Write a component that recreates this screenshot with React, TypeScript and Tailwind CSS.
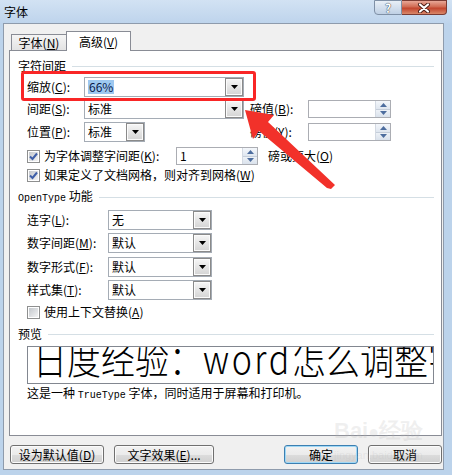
import React from "react";

function U({ k }: { k: string }) {
  return (
    <>
      (<span className="underline underline-offset-[1px]">{k}</span>)
    </>
  );
}

function DownTri() {
  return (
    <svg width="7" height="4" viewBox="0 0 7 4">
      <path d="M0 0H7L3.5 4Z" fill="#000" />
    </svg>
  );
}

function Combo({ w, text, sel }: { w: string; text: string; sel?: boolean }) {
  return (
    <div className={`${w} h-[20px] flex border border-[#a5acb5] bg-white`}>
      <div className="flex-1 flex items-center pl-[3px] leading-[14px] whitespace-nowrap overflow-hidden">
        {sel ? <span className="bg-[#9ec8f0] text-[#0a1a4a] px-px">{text}</span> : text}
      </div>
      <div className="w-[18px] h-full border border-[#8a8a8a] bg-gradient-to-b from-[#f6f6f6] to-[#d4d4d4] shadow-[inset_0_0_0_1px_#fbfbfb] flex items-center justify-center">
        <DownTri />
      </div>
    </div>
  );
}

function Spin({ w, value }: { w: string; value: string }) {
  return (
    <div className={`${w} h-[18px] flex border border-[#abadb3] bg-white`}>
      <div className="flex-1 flex items-center pl-[3px] leading-[14px]">{value}</div>
      <div className="w-[15px] flex flex-col border-l border-[#d3d9e2]">
        <div className="flex-1 flex items-center justify-center bg-gradient-to-b from-[#f4f7fb] to-[#dfe6ef] border-b border-[#c5ceda]">
          <svg width="7" height="4" viewBox="0 0 7 4">
            <path d="M0 4H7L3.5 0Z" fill="#4d6d9e" />
          </svg>
        </div>
        <div className="flex-1 flex items-center justify-center bg-gradient-to-b from-[#eef2f7] to-[#dae2ec]">
          <svg width="7" height="4" viewBox="0 0 7 4">
            <path d="M0 0H7L3.5 4Z" fill="#4d6d9e" />
          </svg>
        </div>
      </div>
    </div>
  );
}

function Check({ on }: { on?: boolean }) {
  return (
    <div className="w-[13px] h-[13px] border border-[#8e8f8f] bg-white p-px shrink-0">
      <div className="w-full h-full bg-gradient-to-br from-[#c3c7cc] to-[#f4f4f5] flex items-center justify-center">
        {on && (
          <svg width="9" height="9" viewBox="0 0 9 9">
            <path d="M1 4.5L3.5 7L8 1.5" fill="none" stroke="#3f5fa8" strokeWidth="2" />
          </svg>
        )}
      </div>
    </div>
  );
}

function Btn({ w, children, def }: { w: string; children: React.ReactNode; def?: boolean }) {
  return (
    <div
      className={`${w} h-[19px] rounded-[3px] border flex items-center justify-center leading-[14px] bg-[linear-gradient(#f2f2f2,#ebebeb_50%,#dddddd_50%,#cfcfcf)] ${
        def
          ? "border-[#3c7fb1] shadow-[inset_0_0_0_1px_#9fd8f6]"
          : "border-[#707070] shadow-[inset_0_0_0_1px_#fbfbfb]"
      }`}
    >
      {children}
    </div>
  );
}

function Group({ title, mt }: { title: React.ReactNode; mt: string }) {
  return (
    <div className={`h-[20px] flex items-center gap-[6px] ${mt}`}>
      <span className="whitespace-nowrap">{title}</span>
      <div className="flex-1 h-px bg-[#d5dfe5]" />
    </div>
  );
}

export default function App() {
  return (
    <div className="relative w-[452px] h-[475px] overflow-hidden flex flex-col bg-[#bcd3eb] text-[12px] leading-[14px] text-black font-['Noto_Sans_CJK_SC','Noto_Sans',sans-serif]">
      {/* title bar */}
      <div className="h-[23px] flex items-start bg-gradient-to-b from-[#d2e2f3] to-[#bed4ec]">
        <div className="pl-[4px] pt-[5px]">字体</div>
        <div className="ml-auto mr-[5px] flex">
          <div className="w-[28px] h-[15px] border border-[#7f90a6] rounded-bl-[4px] bg-gradient-to-b from-[#e8eff7] to-[#bfd0e4] flex items-center justify-center text-white font-bold text-[12px] leading-[12px] [text-shadow:0_0_1px_#2c3a4c,0_0_1px_#2c3a4c]">
            ?
          </div>
          <div className="w-[45px] h-[15px] border border-l-0 border-[#7a3b33] rounded-br-[4px] bg-[linear-gradient(#e8a797,#d06a52_45%,#c2452e_55%,#d98869)] flex items-center justify-center">
            <svg width="14" height="10" viewBox="0 0 14 10">
              <path d="M3 1.5L11 8.5M11 1.5L3 8.5" stroke="#4a1d16" strokeWidth="4" strokeLinecap="round" />
              <path d="M3 1.5L11 8.5M11 1.5L3 8.5" stroke="#ffffff" strokeWidth="2.2" strokeLinecap="round" />
            </svg>
          </div>
        </div>
      </div>

      <div className="flex flex-1">
        <div className="w-[3px]" />
        {/* client */}
        <div className="w-[441px] border border-[#8e9bac] bg-[#f0f0f0] flex flex-col pt-[7px] pl-[5px]">
          {/* tabs */}
          <div className="h-[19px] flex items-end pl-[2px]">
            <div className="w-[56px] h-[16px] border border-b-0 border-[#898c95] bg-gradient-to-b from-[#f5f5f5] to-[#e3e3e3] flex items-center justify-center">
              字体<U k="N" />
            </div>
            <div className="relative z-10 -ml-px -mb-px w-[65px] h-[20px] border border-b-0 border-[#898c95] bg-white flex items-center justify-center">
              高级<U k="V" />
            </div>
          </div>

          {/* panel */}
          <div className="w-[433px] h-[386px] border border-[#898c95] bg-white flex flex-col pl-[8px] pr-[7px]">
            <Group title="字符间距" mt="mt-[5px]" />

            <div className="h-[20px] flex items-center pl-[9px] mt-[1px]">
              <div className="w-[57px] whitespace-nowrap">
                缩放<U k="C" />:
              </div>
              <Combo w="w-[160px]" text="66%" sel />
            </div>

            <div className="h-[20px] flex items-center pl-[9px] mt-[2px]">
              <div className="w-[57px] whitespace-nowrap">
                间距<U k="S" />:
              </div>
              <div className="w-[166px]">
                <Combo w="w-[160px]" text="标准" />
              </div>
              <div className="w-[58px] whitespace-nowrap">
                磅值<U k="B" />:
              </div>
              <Spin w="w-[83px]" value="" />
            </div>

            <div className="h-[20px] flex items-center pl-[9px] mt-[3px]">
              <div className="w-[57px] whitespace-nowrap">
                位置<U k="P" />:
              </div>
              <div className="w-[166px]">
                <Combo w="w-[61px]" text="标准" />
              </div>
              <div className="w-[58px] whitespace-nowrap">
                磅值<U k="Y" />:
              </div>
              <Spin w="w-[83px]" value="" />
            </div>

            <div className="h-[18px] flex items-center pl-[9px] mt-[5px]">
              <div className="w-[149px] flex items-center gap-[4px] whitespace-nowrap">
                <Check on />
                <span>
                  为字体调整字间距<U k="K" />:
                </span>
              </div>
              <Spin w="w-[82px]" value="1" />
              <div className="ml-[10px] whitespace-nowrap">
                磅或更大<U k="O" />
              </div>
            </div>

            <div className="h-[18px] flex items-center pl-[9px] mt-[1px] gap-[4px] whitespace-nowrap">
              <Check on />
              <span>
                如果定义了文档网格，则对齐到网格<U k="W" />
              </span>
            </div>

            <Group
              title={
                <>
                  <span className="font-['Liberation_Mono',monospace] text-[10px]">OpenType</span> 功能
                </>
              }
              mt="mt-[3px]"
            />

            <div className="h-[20px] flex items-center pl-[9px] mt-[3px]">
              <div className="w-[81px] whitespace-nowrap">
                连字<U k="L" />:
              </div>
              <Combo w="w-[104px]" text="无" />
            </div>
            <div className="h-[20px] flex items-center pl-[9px] mt-[3px]">
              <div className="w-[81px] whitespace-nowrap">
                数字间距<U k="M" />:
              </div>
              <Combo w="w-[104px]" text="默认" />
            </div>
            <div className="h-[20px] flex items-center pl-[9px] mt-[4px]">
              <div className="w-[81px] whitespace-nowrap">
                数字形式<U k="F" />:
              </div>
              <Combo w="w-[104px]" text="默认" />
            </div>
            <div className="h-[20px] flex items-center pl-[9px] mt-[3px]">
              <div className="w-[81px] whitespace-nowrap">
                样式集<U k="T" />:
              </div>
              <Combo w="w-[104px]" text="默认" />
            </div>

            <div className="h-[18px] flex items-center pl-[9px] mt-[3px] gap-[4px] whitespace-nowrap">
              <Check />
              <span>
                使用上下文替换<U k="A" />
              </span>
            </div>

            <Group title="预览" mt="mt-[3px]" />

            <div className="ml-[9px] mt-[2px] w-[407px] h-[38px] border border-[#828790] bg-white overflow-hidden pl-[5px]">
              <div className="text-[40px] leading-[20px] font-light whitespace-nowrap origin-left scale-x-[0.85]">
                日度经验：<span className="tracking-[3px]">word</span>怎么调整字
              </div>
            </div>

            <div className="pl-[9px] mt-[2px] h-[14px] whitespace-nowrap">
              这是一种 <span className="font-['Liberation_Mono',monospace] text-[10px]">TrueType</span> 字体，同时适用于屏幕和打印机。
            </div>
          </div>

          {/* bottom buttons */}
          <div className="mt-[9px] flex items-center pl-[1px] pr-[1px]">
            <Btn w="w-[94px]">
              设为默认值<U k="D" />
            </Btn>
            <div className="ml-[10px]">
              <Btn w="w-[100px]">
                文字效果<U k="E" />...
              </Btn>
            </div>
            <div className="ml-auto flex gap-[10px]">
              <Btn w="w-[74px]" def>
                确定
              </Btn>
              <Btn w="w-[74px]">取消</Btn>
            </div>
          </div>
        </div>
        <div className="flex-1" />
      </div>
      <div className="h-[5px]" />

      {/* red highlight rectangle (annotation overlay) */}
      <div className="absolute left-[21px] top-[71px] w-[235px] h-[30px] border-[3px] border-[#f92626] rounded-[3px] pointer-events-none" />

      {/* red arrow annotation */}
      <svg className="absolute left-0 top-0 pointer-events-none" width="452" height="475" viewBox="0 0 452 475">
        <polygon
          points="245,110 274,115 268,122 335,185 331,189 327,188 259,131 253,139"
          fill="#f2312a"
        />
      </svg>

      {/* faint watermark */}
      <div className="absolute left-[334px] top-[420px] pointer-events-none text-[rgba(185,185,185,0.22)] flex flex-col items-start">
        <div className="font-['Liberation_Sans',sans-serif] font-bold text-[22px] leading-[22px]">
          Bai<span className="text-[18px]">●</span>经验
        </div>
        <div className="font-['Liberation_Sans',sans-serif] text-[11px] leading-[12px] mt-[6px]">jingyan.baidu.com</div>
      </div>
    </div>
  );
}
